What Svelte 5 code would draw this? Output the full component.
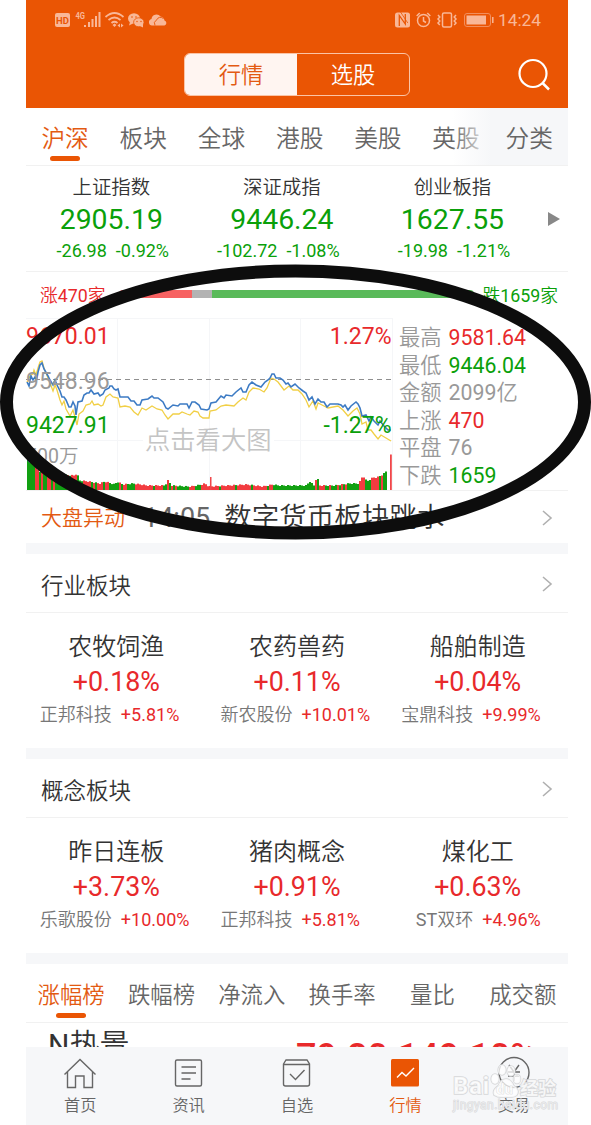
<script lang="ts">
  const markets = ['沪深', '板块', '全球', '港股', '美股', '英股'];

  const indices = [
    { name: '上证指数', price: '2905.19', diff: '-26.98', pct: '-0.92%' },
    { name: '深证成指', price: '9446.24', diff: '-102.72', pct: '-1.08%' },
    { name: '创业板指', price: '1627.55', diff: '-19.98', pct: '-1.21%' }
  ];

  const stats = [
    { label: '最高', value: '9581.64', tone: 'up' },
    { label: '最低', value: '9446.04', tone: 'down' },
    { label: '金额', value: '2099亿', tone: 'flat' },
    { label: '上涨', value: '470', tone: 'up' },
    { label: '平盘', value: '76', tone: 'flat' },
    { label: '下跌', value: '1659', tone: 'down' }
  ];

  const sections = [
    {
      title: '行业板块',
      items: [
        { name: '农牧饲渔', pct: '+0.18%', stock: '正邦科技', gain: '+5.81%' },
        { name: '农药兽药', pct: '+0.11%', stock: '新农股份', gain: '+10.01%' },
        { name: '船舶制造', pct: '+0.04%', stock: '宝鼎科技', gain: '+9.99%' }
      ]
    },
    {
      title: '概念板块',
      items: [
        { name: '昨日连板', pct: '+3.73%', stock: '乐歌股份', gain: '+10.00%' },
        { name: '猪肉概念', pct: '+0.91%', stock: '正邦科技', gain: '+5.81%' },
        { name: '煤化工', pct: '+0.63%', stock: 'ST双环', gain: '+4.96%' }
      ]
    }
  ];

  const ranks = ['涨幅榜', '跌幅榜', '净流入', '换手率', '量比', '成交额'];

  const nav = [
    { id: 'home', label: '首页' },
    { id: 'news', label: '资讯' },
    { id: 'fav', label: '自选' },
    { id: 'market', label: '行情' },
    { id: 'trade', label: '交易' }
  ];

  // chart space: 366 x 173
  const price =
    '1,64 3,68 5,58 7,62 9,59 11,60 12,54 14,47 16,45 18,51 22,58 24,62 27,67 29,62 31,67 34,73 36,79 38,79 40,82 43,89 45,89 47,84 49,88 50,97 52,84 56,83 58,77 61,75 63,75 65,72 68,76 72,75 74,78 77,76 79,72 83,70 84,68 86,68 88,71 90,72 92,71 94,79 102,79 105,83 108,83 111,87 114,87 116,82 122,81 126,78 128,80 132,80 137,84 140,90 142,91 147,87 152,88 154,86 161,86 163,90 166,84 169,84 173,87 175,91 181,92 183,91 185,85 190,84 195,78 198,80 200,77 206,78 210,74 215,70 217,74 220,74 223,67 226,64 230,67 235,69 239,64 242,62 244,60 246,56 248,56 250,60 254,60 257,62 260,66 262,65 265,69 269,66 273,70 277,73 280,75 283,82 286,79 289,86 292,81 295,84 298,84 301,89 304,86 312,86 315,87 317,89 319,87 322,92 325,88 330,84 332,86 334,90 336,98 340,97 343,103 345,99 348,103 352,107 354,103 358,108 362,112 365,112';
  const average =
    '1,64 3,60 5,57 7,56 8,52 10,57 12,50 14,44 16,43 18,50 22,60 24,65 27,73 29,67 31,72 34,82 36,87 38,83 40,91 44,98 47,92 49,99 51,107 53,96 57,93 60,87 64,86 66,83 68,87 72,86 75,88 77,87 80,79 84,76 87,79 92,80 94,89 99,88 104,89 108,94 112,97 116,90 120,92 126,88 131,91 136,92 139,97 142,101 147,96 153,96 156,94 161,96 164,97 168,93 172,94 174,98 177,100 183,100 184,93 190,92 195,88 200,87 208,88 212,84 217,80 220,82 223,74 227,70 233,71 238,74 241,70 245,60 248,61 252,64 258,72 263,68 267,72 272,72 276,76 280,82 283,89 287,83 290,91 292,85 298,88 302,90 312,88 317,92 322,98 327,93 331,90 334,96 336,106 340,104 342,112 345,112 348,116 352,121 355,117 360,120 365,123';

  // volume envelope as [x, height]
  const envelope = [
    [0, 22], [2, 49], [4, 28], [9, 22], [14, 17], [30, 15], [47, 14], [50, 16], [53, 9], [62, 8], [73, 6],
    [78, 8], [88, 5], [90, 8], [96, 5], [106, 6], [114, 5], [120, 4], [138, 4], [141, 9], [145, 4], [160, 3],
    [164, 3], [175, 5], [178, 6], [182, 3], [220, 5], [236, 3], [246, 5], [252, 4], [279, 4], [283, 8],
    [287, 4], [290, 13], [293, 4], [308, 4], [322, 6], [332, 6], [336, 14], [340, 8], [346, 12], [350, 12],
    [356, 15], [361, 20]
  ];
  const pattern = 'ggrgrrggrggrrgrgr';

  function heightAt(x: number) {
    for (let i = 1; i < envelope.length; i++) {
      const [x0, h0] = envelope[i - 1];
      const [x1, h1] = envelope[i];
      if (x <= x1) return h0 + ((h1 - h0) * (x - x0)) / (x1 - x0);
    }
    return 20;
  }

  const bars = Array.from({ length: 180 }, (_, i) => {
    const x = 1 + i * 2;
    let up = pattern[(i * 7 + Math.floor(i / 5)) % pattern.length] === 'r';
    if (x < 9) up = false;
    if (x > 110 && x < 136) up = i % 9 !== 0;
    if (x > 180 && x < 245) up = i % 8 !== 0;
    if (x > 248 && x < 286) up = false;
    return { x, h: Math.max(3, heightAt(x) + ((i * 5) % 3) / 2), up };
  });
</script>

<div class="stage">
  <div class="phone">
    <header>
      <div class="status">
        <svg width="114" height="20" viewBox="0 0 114 20" fill="#f9b797">
          <rect x="1" y="4" width="15" height="14" rx="2" />
          <text x="8.500" y="14.500" font-size="9.500" font-weight="700" text-anchor="middle" fill="#ea5504">HD</text>
          <text x="21.500" y="10" font-size="9" font-weight="700" textLength="9.500" lengthAdjust="spacingAndGlyphs">4G</text>
          <path d="M30 16h2v2h-2zM34 13h2v5h-2zM37.500 10h2v8h-2zM41 7h2v11h-2zM44.500 3h2v15h-2z" />
          <g fill="none" stroke="#f9b797" stroke-width="1.700">
            <path d="M51.500 8q9-8 18 0M54.500 11q6-5 12 0M57.500 14q3-2.500 6 0" />
          </g>
          <path d="M58.500 16l2-1.500 2 1.500-2 2zM63.500 16.500l2.500-2v4zM69.500 16.500l-2.500-2v4z" />
          <ellipse cx="80" cy="9.500" rx="6" ry="5.200" />
          <path d="M76 13l-1 3.500 4-2z" />
          <ellipse cx="84.800" cy="13.300" rx="5.200" ry="4.500" stroke="#ea5504" stroke-width=".8" />
          <path d="M86 17l3 1.500v-4z" />
          <g fill="#ea5504"><circle cx="78" cy="8" r=".8" /><circle cx="82" cy="8" r=".8" /><circle cx="83" cy="12.500" r=".7" /><circle cx="87" cy="12.500" r=".7" /></g>
          <path d="M98 16.500a3.300 3.300 0 0 1-.5-6.500 5 5 0 0 1 9-2.500 5 5 0 0 1 4 4 2.600 2.600 0 0 1 0 5z" />
          <path d="M101 16.500q-2-3.500 1.500-5.500 2.500-4.500 7-1.500" fill="none" stroke="#ea5504" stroke-width=".9" />
        </svg>
        <svg class="right" width="102" height="20" viewBox="0 0 102 20" fill="none" stroke="#f9b797" stroke-width="1.500">
          <rect x="2" y="3.500" width="15" height="15" rx="2.500" fill="#f9b797" stroke="none" />
          <path d="M6.300 17V6.500l6 8.500V5" stroke="#ea5504" stroke-width="1.300" />
          <path d="M7.500 3l7.300 11" stroke="#ea5504" stroke-width=".8" />
          <circle cx="30.500" cy="11.500" r="6" />
          <path d="M30.500 8v4l2.500 1.500M23.700 7l3-3M37.300 7l-3-3" />
          <rect x="49.500" y="4" width="9" height="14" rx="1.500" />
          <path d="M45 6l1.800 2-1.800 2 1.800 2-1.800 2 1.800 2M63 6l-1.800 2 1.800 2-1.800 2 1.800 2-1.800 2" />
          <rect x="71.500" y="4.500" width="26" height="13" rx="2.500" stroke="#f28e5c" stroke-width="1" />
          <rect x="73.500" y="6.500" width="19.500" height="9" fill="#f9b797" stroke="none" />
          <path d="M99.800 8v6" />
        </svg>
        <span class="clock">14:24</span>
      </div>
      <div class="bar">
        <div class="segment">
          <span class="on">行情</span>
          <span>选股</span>
        </div>
        <svg class="search" width="34" height="34" viewBox="0 0 34 34" fill="none" stroke="#fff" stroke-width="2.200">
          <circle cx="16" cy="15.500" r="13.500" />
          <path d="M25.500 25l6.500 6.500" stroke-width="2.500" />
        </svg>
      </div>
    </header>

    <nav class="markets">
      {#each markets as m, i}
        <span class:active={i === 0}>{m}</span>
      {/each}
      <div class="fade"><span>分类</span></div>
    </nav>

    <section class="indices">
      {#each indices as idx}
        <div class="index down">
          <span class="name">{idx.name}</span>
          <b>{idx.price}</b>
          <div class="pair"><span>{idx.diff}</span><span>{idx.pct}</span></div>
        </div>
      {/each}
      <i class="arrow"></i>
    </section>

    <section class="breadth">
      <span class="up">涨470家</span>
      <div class="meter"><i class="m-up"></i><i class="m-flat"></i><i class="m-down"></i></div>
      <span class="down">跌1659家</span>
    </section>

    <section class="quote">
      <svg class="chart" width="367" height="172" viewBox="0 0 367 172">
        <path d="M0 .5H367M0 122.500H117M248 122.500H367M91.500 0V172M183.500 0V172M274.500 0V172M366.500 0V172" stroke="#f5f6f8" fill="none" />
        {#each bars as b}
          <rect x={b.x} y={172 - b.h} width="2" height={b.h} fill={b.up ? '#f23c40' : '#12a012'} />
        {/each}
        <rect x="184" y="159" width="1.500" height="13" fill="#f0474a" />
        <rect x="364" y="136.500" width="1.800" height="35.500" fill="#f0474a" />
        <text x="119" y="130.500" font-size="25.300" fill="#c4c4c4">点击看大图</text>
        <path d="M0 61.500H366" stroke="#8f8f8f" stroke-dasharray="5 4" />
        <polyline points={average} fill="none" stroke="#f1cf45" stroke-width="1.300" />
        <polyline points={price} fill="none" stroke="#3d7bc4" stroke-width="1.600" />
        <g font-size="23">
          <text x="0" y="26" fill="#e8292b">9670.01</text>
          <text x="0" y="70.500" fill="#999">9548.96</text>
          <text x="0" y="115" fill="#0aa00a">9427.91</text>
          <text x="365.500" y="26" text-anchor="end" fill="#e8292b">1.27%</text>
          <text x="365.500" y="115" text-anchor="end" fill="#0aa00a">-1.27%</text>
        </g>
        <text x="0" y="144.500" font-size="19.500" fill="#999">500万</text>
      </svg>
      <dl>
        {#each stats as s}
          <div><dt>{s.label}</dt><dd class={s.tone}>{s.value}</dd></div>
        {/each}
      </dl>
    </section>

    <section class="alert">
      <span class="tag">大盘异动</span>
      <span class="time">14:05</span>
      <span class="headline">数字货币板块跳水</span>
      <svg class="chev" width="12" height="18" viewBox="0 0 12 18"><path d="M2 2l8 7-8 7" /></svg>
    </section>

    {#each sections as sec}
      <section class="block">
        <div class="head">
          <span>{sec.title}</span>
          <svg class="chev" width="12" height="18" viewBox="0 0 12 18"><path d="M2 2l8 7-8 7" /></svg>
        </div>
        <div class="cells">
          {#each sec.items as it}
            <div class="cell">
              <span class="name">{it.name}</span>
              <b class="up">{it.pct}</b>
              <div class="pair"><span>{it.stock}</span><span class="up">{it.gain}</span></div>
            </div>
          {/each}
        </div>
      </section>
    {/each}

    <nav class="ranks">
      {#each ranks as r, i}
        <span class:active={i === 0}>{r}</span>
      {/each}
    </nav>

    <div class="row">
      <span class="stock">N热景</span>
      <span class="num">79.80</span>
      <span class="num">149.10%</span>
    </div>

    <nav class="tabbar">
      {#each nav as n}
        <div class="tab" class:current={n.id === 'market'}>
          <svg width="34" height="34" viewBox="0 0 34 34" fill="none" stroke="#666" stroke-width="1.400">
            {#if n.id === 'home'}
              <path d="M1.500 18.500L17 3.500l15.500 15M4.500 16v15.500h8V20h8.500v11.500h8.500V16" />
            {:else if n.id === 'news'}
              <rect x="3.500" y="4" width="26" height="26" rx="1.500" />
              <path d="M9.500 11H24M9.500 17H24M9.500 23h9" stroke-width="1.700" />
            {:else if n.id === 'fav'}
              <path d="M3.500 8l2.500-4h21l2.500 4v20a2 2 0 0 1-2 2h-22a2 2 0 0 1-2-2zM4 8.500h25M10 18l5.500 5.500 9-9.500" />
            {:else if n.id === 'market'}
              <rect x="3" y="3" width="28" height="27.500" rx="1.500" fill="#ea5504" stroke="none" />
              <path d="M9 21.500l5-5 4 3.500 8-8" stroke="#fff" />
            {:else}
              <circle cx="17" cy="16.500" r="15" />
              <path d="M12 9l5 7 5-7M17 16v9M11 16h12M11 20h12" />
            {/if}
          </svg>
          <span>{n.label}</span>
        </div>
      {/each}
    </nav>
  </div>

  <svg class="ring" width="591" height="280" viewBox="0 0 591 280">
    <ellipse cx="295.500" cy="140" rx="289" ry="131" fill="none" stroke="#0d0d0d" stroke-width="13" />
  </svg>

  <svg class="mark" width="112" height="56" viewBox="0 0 112 56">
    <g fill="#fff" fill-opacity=".75" stroke="#d6d7d9" stroke-width="1.600" paint-order="stroke">
      <text x="2" y="35" font-size="24" font-weight="700" textLength="36">Bai</text>
      <ellipse cx="44" cy="20" rx="3.800" ry="5" />
      <ellipse cx="51" cy="11" rx="3.800" ry="5" />
      <ellipse cx="60" cy="12" rx="3.800" ry="5" />
      <ellipse cx="66" cy="20" rx="3.500" ry="4.500" />
      <path d="M55 20q5 0 8 7 6 4 3 9-3 3-11 2-8 1-12-2-2-5 4-9 3-7 8-7z" />
      <text x="45" y="35" font-size="15" font-weight="700" stroke="#ccc" stroke-width=".6">du</text>
      <text class="cn" x="69" y="36" font-size="18" font-weight="700">经验</text>
      <text x="2" y="50" font-size="12" stroke-width="1" fill-opacity=".5" textLength="105">jingyan.baidu.com</text>
    </g>
  </svg>
</div>

<style>
  :global(body) { margin: 0; background: #fff; }
  .stage { position: relative; width: 591px; height: 1125px; overflow: hidden; font-family: Roboto, 'Noto Sans CJK SC DemiLight', 'Noto Sans CJK SC', sans-serif; color: #333; }
  .phone { width: 542px; height: 1125px; margin-left: 26px; display: flex; flex-direction: column; overflow: hidden; }
  .phone > * { box-sizing: border-box; flex-shrink: 0; }
  span, dt, dd { white-space: nowrap; }
  .up { color: #e8292b; }
  .down { color: #0aa00a; }
  .flat { color: #999; }

  header { height: 108px; background: #ea5504; }
  .status { height: 40px; padding: 0 27px 0 28px; display: flex; align-items: center; box-sizing: border-box; }
  .status svg { margin-top: -2px; }
  .status .right { margin-left: auto; }
  .clock { margin-left: 3px; font-size: 17.3px; color: #f9b797; }
  .bar { display: flex; justify-content: space-between; padding: 13px 17px 0 158px; }
  .segment { display: flex; width: 226px; height: 43px; box-sizing: border-box; border: 1px solid #fbc4a6; border-radius: 6px; overflow: hidden; }
  .segment span { flex: 1; text-align: center; font-size: 22.3px; line-height: 43px; color: #fff; }
  .segment .on { background: #fff5f1; color: #e35a12; }
  .search { margin-top: 5px; }

  .markets { position: relative; height: 58px; border-bottom: 1px solid #f1f1f1; display: flex; overflow: hidden; font-size: 23.7px; line-height: 62px; color: #666; }
  .markets > span { position: relative; width: 78.2px; height: 57px; flex-shrink: 0; text-align: center; }
  .markets .active, .ranks .active { color: #e35a12; }
  .active::after { content: ''; position: absolute; left: 50%; margin-left: -15px; bottom: 4px; width: 30px; height: 5px; border-radius: 3px; background: #ea5504; }
  .fade { position: absolute; right: 0; top: 0; width: 116px; height: 57px; padding-right: 15px; box-sizing: border-box; text-align: right; background: linear-gradient(90deg, #f6f7f900, #f6f7f9 34%); }

  .indices { height: 106px; border-bottom: 1px solid #f1f1f1; display: flex; align-items: flex-start; }
  .index { width: 170.6px; display: flex; flex-direction: column; align-items: center; }
  .index .name { margin-top: 8px; font-size: 19.4px; line-height: 28px; color: #333; }
  .index b { font-weight: 400; font-size: 28.4px; line-height: 36px; }
  .pair { width: 100%; display: flex; gap: 9px; font-size: 18px; line-height: 26px; }
  .pair span { flex: 1; width: 0; }
  .pair span:first-child { display: flex; justify-content: flex-end; }
  .arrow { margin: 46px 0 0 10px; border-left: 12px solid #888; border-top: 7px solid transparent; border-bottom: 7px solid transparent; }

  .breadth { height: 46px; display: flex; align-items: center; padding: 0 10px 2px 14px; font-size: 17.8px; }
  .meter { flex: 1; height: 8px; margin: 0 8px 0 13px; border-radius: 4px; overflow: hidden; display: flex; }
  .meter i { display: block; }
  .m-up { width: 73px; background: #f76262; }
  .m-flat { width: 20px; background: #b3b3b3; }
  .m-down { flex: 1; background: #5aba5a; }

  .quote { height: 173px; display: flex; border-bottom: 1px solid #f1f1f1; }
  dl { margin: 6px 0 0 6px; font-size: 21.3px; line-height: 27.6px; }
  dl div { display: flex; gap: 7px; }
  dt { color: #999; }
  dd { margin: 0; }

  .alert { height: 63px; border-bottom: 11px solid #f6f7f9; padding: 1px 15px 0; display: flex; align-items: center; }
  .tag { font-size: 21px; line-height: 30px; color: #e35a12; }
  .time { margin-left: 18px; font-size: 27px; color: #666; }
  .headline { margin-left: 14px; font-size: 27.5px; line-height: 40px; }
  .chev { margin-left: auto; fill: none; stroke: #b0b0b0; stroke-width: 1.6; }

  .block { height: 205px; border-bottom: 11px solid #f6f7f9; }
  .head { height: 59px; box-sizing: border-box; border-bottom: 1px solid #f1f1f1; padding: 1px 15px 0; display: flex; align-items: center; font-size: 22.5px; }
  .cells { display: flex; }
  .cell { flex: 1; display: flex; flex-direction: column; align-items: center; padding-top: 17px; }
  .cell .name { font-size: 24px; line-height: 35px; }
  .cell b { font-weight: 400; font-size: 26.8px; line-height: 34px; }
  .cell .pair { color: #777; margin-top: 3px; line-height: 26px; }

  .ranks { height: 59px; border-bottom: 1px solid #f1f1f1; display: flex; font-size: 22.4px; line-height: 62px; color: #666; }
  .ranks span { position: relative; flex: 1; height: 58px; text-align: center; }
  .row { height: 24px; overflow: hidden; display: flex; padding-left: 22px; }
  .stock { font-size: 30px; line-height: 43px; width: 248px; }
  .num { font-size: 36px; line-height: 58px; color: #e8292b; font-weight: 500; margin-right: 10px; margin-top: 5px; }

  .tabbar { height: 78px; background: #f6f7f9; display: flex; color: #666; }
  .tab { flex: 1; display: flex; flex-direction: column; align-items: center; padding-top: 9px; font-size: 16.2px; line-height: 26px; }
  .tab svg { margin-bottom: 3px; }
  .current { color: #e35a12; }

  .ring { position: absolute; left: 0; top: 262px; }
  .mark { position: absolute; left: 451px; top: 1059px; }
  .cn { font-family: 'Noto Sans CJK SC', sans-serif; }
</style>
